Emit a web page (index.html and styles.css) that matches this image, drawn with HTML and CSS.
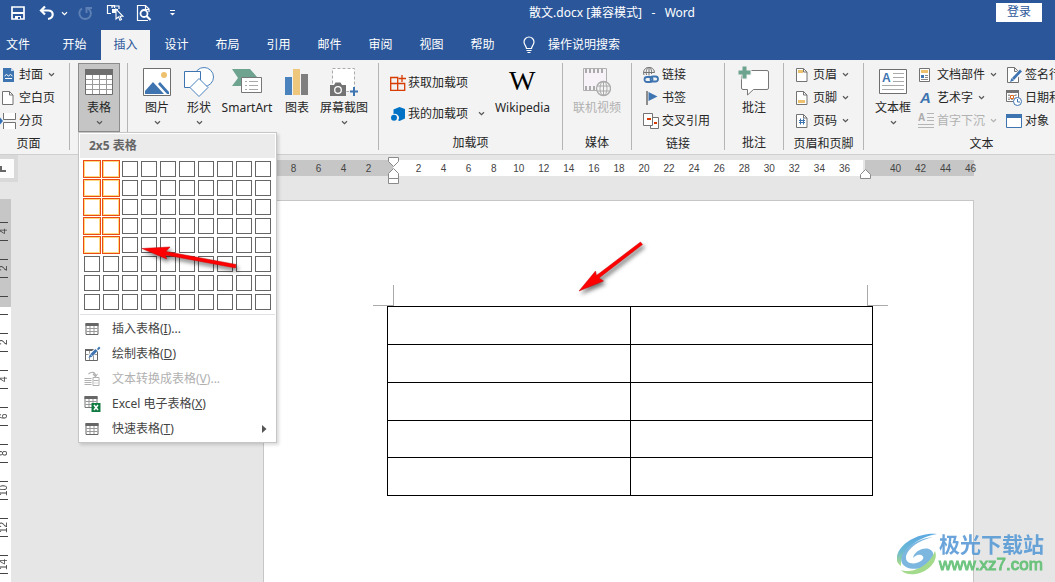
FILE: index.html
```html
<!DOCTYPE html>
<html lang="zh-CN">
<head>
<meta charset="utf-8">
<title>散文.docx - Word</title>
<link rel="stylesheet" href="styles.css">
</head>
<body>
<svg class="defs" aria-hidden="true">
  <symbol id="chev" viewBox="0 0 7 7"><path d="M1 2.2 3.5 4.6 6 2.2" fill="none" stroke="currentColor" stroke-width="1.2"/></symbol>
  <symbol id="page" viewBox="0 0 16 16"><path d="M2.5 1.5h7l3.500 3.500v9.500h-10.500z" fill="#fff" stroke="#737373"/><path d="M9.500 1.500v3.500h3.500" fill="none" stroke="#737373"/></symbol>
  <symbol id="minitable" viewBox="0 0 16 16"><path d="M1.500 2.500h12v11h-12z" fill="#fff" stroke="#666"/><path d="M1 2h13v3H1z" fill="#666"/><path d="M2 7.500h11M2 10.500h11M5.500 5v8M9.500 5v8" stroke="#999"/></symbol>
</svg>

<header class="titlebar">
  <div class="quick">
    <button class="qbtn save" aria-label="保存"><svg width="16" height="16" viewBox="0 0 16 16"><path d="M2 2h12v12H2z" fill="none" stroke="#fff" stroke-width="1.700"/><path d="M2 7h12v2H2zM5 11h6v3H5z" fill="#fff"/><path d="M8 12h2v2H8z" fill="#2b579a"/></svg></button>
    <button class="qbtn undo" aria-label="撤消"><svg width="16" height="16" viewBox="0 0 16 16"><path d="M6 1.500 2 5.500l4 4M2.500 5.500H9c6 0 6.500 7.500 0 8.500" fill="none" stroke="#fff" stroke-width="2.200"/></svg></button>
    <button class="qbtn more" aria-label="撤消列表"><svg width="7" height="7"><use href="#chev"/></svg></button>
    <button class="qbtn redo" aria-label="重复" disabled><svg width="16" height="16" viewBox="0 0 16 16"><path d="M5 3.500C0 7 3 14 8 14c6 0 8-7 3-10.500M9.500 8V3H15" fill="none" stroke="#5e80b5" stroke-width="1.900"/></svg></button>
    <button class="qbtn pick" aria-label="选择对象"><svg width="18" height="18" viewBox="0 0 18 18"><path d="M5 9.500H1.500v-8h7V4M6 4V2h7v3" fill="none" stroke="#fff" stroke-width="1.200"/><path d="M6 5h6v4H6z" fill="#fff"/><path d="M10 5v10l2.500-2.200 1.500 3.500 1.500-.7-1.500-3.300H17z" fill="#2b579a" stroke="#fff" stroke-width="1.100"/></svg></button>
    <button class="qbtn view" aria-label="打印预览"><svg width="16" height="18" viewBox="0 0 16 18"><path d="M12 16.500H1.500v-15h8l3.500 3.500v3M9.500 1.500v4H13" fill="none" stroke="#fff" stroke-width="1.200"/><circle cx="8" cy="9.500" r="3.500" fill="none" stroke="#fff" stroke-width="1.800"/><path d="m10.500 12 4 4" stroke="#fff" stroke-width="2.200"/></svg></button>
    <button class="qbtn custom" aria-label="自定义"><svg width="7" height="8" viewBox="0 0 7 8"><path d="M1 1.500h5" stroke="#fff"/><path d="M1 4h5L3.500 6.500z" fill="#fff"/></svg></button>
  </div>
  <h1 class="doc-title">散文.docx [兼容模式]&nbsp;&nbsp; -&nbsp;&nbsp; Word</h1>
  <button class="login">登录</button>
</header>

<nav class="tabs">
  <button class="tab file">文件</button>
  <button class="tab">开始</button>
  <button class="tab active">插入</button>
  <button class="tab">设计</button>
  <button class="tab">布局</button>
  <button class="tab">引用</button>
  <button class="tab">邮件</button>
  <button class="tab">审阅</button>
  <button class="tab">视图</button>
  <button class="tab">帮助</button>
  <label class="tell-me"><svg width="14" height="18" viewBox="0 0 14 18"><path d="M4.500 12.500C4.500 10 2 9 2 6a5 5 0 0 1 10 0c0 3-2.500 4-2.500 6.500zM4.500 14.500h5M5.500 16.500h3" fill="none" stroke="#fff" stroke-width="1.200"/></svg><input type="text" placeholder="操作说明搜索" aria-label="操作说明搜索"></label>
</nav>

<section class="ribbon">
  <div class="group g-pages">
    <div class="body">
      <div class="stack">
        <button class="row"><svg width="16" height="16" viewBox="0 0 16 16"><path d="M3 1h8l3 3v11H3z" fill="#3e74b0"/><path d="M11 1v3h3" fill="#c9daee"/><path d="m4.500 9 2-1.500 2 1.500 2-1.500 2 1.500M5 11.500h7" fill="none" stroke="#fff"/></svg>封面<svg class="chev" width="7" height="7"><use href="#chev"/></svg></button>
        <button class="row"><svg width="16" height="16"><use href="#page"/></svg>空白页</button>
        <button class="row"><svg width="16" height="16" viewBox="0 0 16 16"><path d="M3.500 0v6.500h12V0M3.500 16V9.500h12V16" fill="#fff" stroke="#737373"/><path d="M0 4.500 3 8l-3 3.500z" fill="#2f6fb5"/></svg>分页</button>
      </div>
    </div>
    <div class="label">页面</div>
  </div>

  <div class="group g-table">
    <div class="body">
      <button class="big pressed" aria-expanded="true"><span class="pic"><svg width="28" height="26" viewBox="0 0 28 26"><path d="M.5.500h27v25H.5z" fill="#fff" stroke="#6e6e6e"/><path d="M0 0h28v6H0z" fill="#6e6e6e"/><path d="M1 10.500h26M1 15.500h26M1 20.500h26M7.500 6v19M14.500 6v19M21.500 6v19" stroke="#999"/></svg></span>表格<svg class="chev" width="7" height="7"><use href="#chev"/></svg></button>
      <div class="menu">
        <div class="menu-head">2x5 表格</div>
        <div class="picker" id="picker"></div>
        <div class="menu-list">
          <button class="item"><svg width="16" height="16"><use href="#minitable"/></svg>插入表格(<u>I</u>)...</button>
          <button class="item"><svg width="17" height="16" viewBox="0 0 17 16"><path d="M1.500 3.500h12v11h-12z" fill="#fff" stroke="#666"/><path d="M1 3h11v2H1z" fill="#666"/><path d="M5.500 5v9M2 8.500h11M9.500 9v5" stroke="#999"/><path d="m5 11 8-8" stroke="#fff" stroke-width="4"/><path d="m7.500 9 5-5" stroke="#3e74b0" stroke-width="3"/><path d="m4.500 12 1.500-4 2.500 2.500zM13 3l2-2.500L16.500 2 14.500 4z" fill="#3e74b0"/></svg>绘制表格(<u>D</u>)</button>
          <button class="item" disabled><svg width="16" height="16" viewBox="0 0 16 16"><path d="M0 7.500h7M0 9.500h7M0 11.500h7M0 13.500h7M8.500 6.500h6v8h-6z" fill="none" stroke="#b1b1b1"/><path d="M9 9.500h5M10 12h1M12 12h1M4 3c3-3 7-2 7 2M8.500 3l2.500 2.500L13 3" fill="none" stroke="#b1b1b1" stroke-width="1.200"/></svg>文本转换成表格(<u>V</u>)...</button>
          <button class="item"><svg width="16" height="16" viewBox="0 0 16 16"><path d="M.5.500h12v11H.5z" fill="#fff" stroke="#777"/><path d="M0 0h13v3H0z" fill="#666"/><path d="M1 5.500h11M1 8.500h11M4.500 3v8M8.500 3v8" stroke="#999"/><path d="M7 7h9v9H7z" fill="#107c41"/><path d="m9.500 9 4 5M13.500 9l-4 5" stroke="#fff" stroke-width="1.500"/></svg>Excel 电子表格(<u>X</u>)</button>
          <button class="item"><svg width="16" height="16"><use href="#minitable"/></svg>快速表格(<u>T</u>)<svg class="sub" width="5" height="8" viewBox="0 0 5 8"><path d="M0 0l4.500 4L0 8z" fill="#555"/></svg></button>
        </div>
      </div>
    </div>
  </div>

  <div class="group g-art">
    <div class="body">
      <button class="big w42"><span class="pic"><svg width="28" height="28" viewBox="0 0 28 28"><path d="M.5.500h27v27H.5z" fill="#fff" stroke="#6e6e6e"/><path d="M2 26v-3l8-9 11 12zM15 16l2-2 9 10v2h-2z" fill="#3e74b0"/><circle cx="21" cy="7" r="3" fill="#eec16e"/></svg></span>图片<svg class="chev" width="7" height="7"><use href="#chev"/></svg></button>
      <button class="big w42"><span class="pic"><svg width="30" height="30" viewBox="0 0 30 30"><circle cx="20" cy="10" r="9.500" fill="#fff" stroke="#4a82bd"/><path d="M.5 4.500h16v16H.5z" fill="#fff" stroke="#3e74b0"/><path d="m15 11.500 9 9-9 9-9-9z" fill="#fff" stroke="#4a82bd"/></svg></span>形状<svg class="chev" width="7" height="7"><use href="#chev"/></svg></button>
      <button class="big w54"><span class="pic"><svg width="30" height="26" viewBox="0 0 30 26"><path d="M0 0h18l7 8-7 9H0l6-8z" fill="#6da38f"/><path d="M9.500 8.500h20v15h-20z" fill="#fff" stroke="#777"/><path d="M13 12.500h2m2 0h9M13 16.500h2m2 0h9M13 20.500h2m2 0h9" stroke="#aaa"/></svg></span>SmartArt</button>
      <button class="big w46"><span class="pic"><svg width="24" height="28" viewBox="0 0 24 28"><path d="M0 9h7v18H0z" fill="#4a82bd"/><path d="M8 1h7v26H8z" fill="#eec67c"/><path d="M16 6h7v21h-7z" fill="#7f7f7f"/></svg></span>图表</button>
      <button class="big w48"><span class="pic"><svg width="28" height="28" viewBox="0 0 28 28"><path d="M2.500.5h22v23h-22z" fill="#fff" stroke="#aaa" stroke-dasharray="3 2"/><path d="M0 17h4l1.500-2.500h5L12 17h4v11H0z" fill="#737373"/><circle cx="8" cy="22" r="3.300" fill="#737373" stroke="#fff" stroke-width="1.300"/><path d="M19 22h10v3H19z" fill="#f3f3f3"/><path d="M24 19v9M20 23.500h8" stroke="#3e74b0" stroke-width="2"/></svg></span>屏幕截图<svg class="chev" width="7" height="7"><use href="#chev"/></svg></button>
    </div>
  </div>

  <div class="group g-addins">
    <div class="body">
      <div class="stack two">
        <button class="row"><svg width="16" height="16" viewBox="0 0 16 16"><path d="M.7 2.500h7v12.800h-7zM.7 8.500h14v6.800h-14z" fill="none" stroke="#d83b01" stroke-width="1.300"/><path d="M12 0v7M8.500 3.500H16" stroke="#d83b01" stroke-width="1.300"/></svg>获取加载项</button>
        <button class="row"><svg width="16" height="16" viewBox="0 0 16 16"><path d="M3.500 3.500 9.500 1l5.500 2v9.500L9.500 15l-1.500-.7A4 4 0 0 0 3.500 8z" fill="#0072c6"/><circle cx="4" cy="11.800" r="3" fill="#0072c6"/></svg>我的加载项<svg class="chev" width="7" height="7"><use href="#chev"/></svg></button>
      </div>
      <button class="big w61"><span class="pic"><svg width="30" height="28" viewBox="0 0 30 28"><text class="wiki" x="1" y="22">W</text></svg></span>Wikipedia</button>
    </div>
    <div class="label">加载项</div>
  </div>

  <div class="group g-media">
    <div class="body">
      <button class="big" disabled><span class="pic"><svg width="28" height="30" viewBox="0 0 28 30"><path d="M.5 1.500h23v22H.5z" fill="#f7f2f8" stroke="#b0b0b0"/><path d="M2 4h20M2 21h20" stroke="#aaa" stroke-width="4" stroke-dasharray="2 2"/><circle cx="20.500" cy="21.500" r="7" fill="#f3f3f3" stroke="#aaa" stroke-width="1.300"/><path d="M14 19h13M14 24h13M20.500 15v13" stroke="#aaa"/><ellipse cx="20.500" cy="21.500" rx="3.500" ry="7" fill="none" stroke="#aaa"/></svg></span>联机视频</button>
    </div>
    <div class="label">媒体</div>
  </div>

  <div class="group g-links">
    <div class="body">
      <div class="stack">
        <button class="row"><svg width="16" height="16" viewBox="0 0 16 16"><path d="M1 8a5.500 5.500 0 1 1 10.500-2.500M.5 5.500h11M6 .5v8M3.500 8c-1-5 1-7.500 2.500-7.500S9 3 8.500 7" fill="none" stroke="#737373"/><rect x="1.500" y="10" width="8" height="5" rx="2.500" fill="none" stroke="#3e74b0" stroke-width="1.800"/><rect x="7.500" y="9.500" width="7.500" height="5" rx="2.500" fill="none" stroke="#3e74b0" stroke-width="1.800"/></svg>链接</button>
        <button class="row"><svg width="16" height="16" viewBox="0 0 16 16"><path d="M4 1v14" stroke="#737373" stroke-width="1.600"/><path d="m5.500 2 9 4.500-9 4.500z" fill="#3e74b0"/></svg>书签</button>
        <button class="row"><svg width="16" height="16" viewBox="0 0 16 16"><path d="M7.500 4.500h8v11h-8z" fill="#fff" stroke="#737373"/><path d="M.5.500h9v12H.5z" fill="#fff" stroke="#737373"/><path d="M4 5h4v2H4zM11 9h3v2h-3z" fill="#d83b01"/></svg>交叉引用</button>
      </div>
    </div>
    <div class="label">链接</div>
  </div>

  <div class="group g-comment">
    <div class="body">
      <button class="big"><span class="pic"><svg width="32" height="32" viewBox="0 0 32 32"><path d="M5 4.500h24q1.500 0 1.500 1.500v16q0 1.500-1.500 1.500H15.500L9.500 29v-5.500H5Q3.500 23.500 3.500 22V6q0-1.500 1.500-1.500z" fill="#fff" stroke="#777"/><path d="M6.500 0v13.500M0 6.500h13.500" stroke="#f3f3f3" stroke-width="6"/><path d="M6.500.5v12M.5 6.500h12" stroke="#6da38f" stroke-width="4"/></svg></span>批注</button>
    </div>
    <div class="label">批注</div>
  </div>

  <div class="group g-head">
    <div class="body">
      <div class="stack">
        <button class="row"><svg width="16" height="16" viewBox="0 0 16 16"><use href="#page"/><path d="M4 3h5v3H4z" fill="#eec16e"/></svg>页眉<svg class="chev" width="7" height="7"><use href="#chev"/></svg></button>
        <button class="row"><svg width="16" height="16" viewBox="0 0 16 16"><use href="#page"/><path d="M4 10h7v3H4z" fill="#eec16e"/></svg>页脚<svg class="chev" width="7" height="7"><use href="#chev"/></svg></button>
        <button class="row"><svg width="16" height="16" viewBox="0 0 16 16"><use href="#page"/><path d="M6.500 5.500v6M9.500 5.500v6M5 7.500h6M5 9.500h6" stroke="#3e74b0"/></svg>页码<svg class="chev" width="7" height="7"><use href="#chev"/></svg></button>
      </div>
    </div>
    <div class="label">页眉和页脚</div>
  </div>

  <div class="group g-text">
    <div class="body">
      <button class="big w50"><span class="pic"><svg width="28" height="26" viewBox="0 0 28 26"><path d="M.5.500h27v24H.5z" fill="#fff" stroke="#6e6e6e"/><path d="M14 4.500h11M14 8.500h11M14 12.500h11M3 16.500h22M3 20.500h22" stroke="#aaa"/><text class="blue-a" x="3" y="13">A</text></svg></span>文本框<svg class="chev" width="7" height="7"><use href="#chev"/></svg></button>
      <div class="stack parts">
        <button class="row"><svg width="16" height="16" viewBox="0 0 16 16"><path d="M1.500 1.500h10v13h-10z" fill="#fff" stroke="#737373"/><path d="M3 3h7v3H3z" fill="#eec16e"/><path d="M3 8h3v3H3z" fill="#3e74b0"/><path d="M7 8.500h3M7 10.500h3M3 12.500h7" stroke="#888"/></svg>文档部件<svg class="chev" width="7" height="7"><use href="#chev"/></svg></button>
        <button class="row"><svg width="16" height="16" viewBox="0 0 16 16"><text class="art-a" x="2" y="13">A</text></svg>艺术字<svg class="chev" width="7" height="7"><use href="#chev"/></svg></button>
        <button class="row" disabled><svg width="16" height="16" viewBox="0 0 16 16"><text class="drop-a" x="0" y="8">A</text><path d="M9 .5h7M9 4.500h7M9 7.500h7M0 11.500h16M0 14.500h16" stroke="#b5b5b5"/></svg>首字下沉<svg class="chev" width="7" height="7"><use href="#chev"/></svg></button>
      </div>
      <div class="stack signs">
        <button class="row"><svg width="16" height="16" viewBox="0 0 16 16"><path d="M1.500.5h7l4 4v11h-11zM8.500.5v4h4" fill="#fff" stroke="#737373"/><path d="m7 12 7-7" stroke="#fff" stroke-width="5"/><path d="m7 12 8-8.500" stroke="#3e74b0" stroke-width="2.800"/><path d="m4 15 1.500-4 2.500 2.500z" fill="#3e74b0"/></svg>签名行</button>
        <button class="row"><svg width="16" height="16" viewBox="0 0 16 16"><path d="M.5.500h12v11H.5z" fill="#fff" stroke="#737373"/><path d="M0 0h13v3H0z" fill="#737373"/><path d="M2 5.500h9M2 9.500h9M3 4v6M10 4v6" stroke="#999" stroke-dasharray="2 1"/><path d="M4.500 5.500h3v3h-3z" fill="none" stroke="#e06a1b"/><circle cx="11.500" cy="11.500" r="4" fill="#fff" stroke="#3e74b0"/><path d="M11.500 9v3H14" fill="none" stroke="#3e74b0"/></svg>日期和时间</button>
        <button class="row"><svg width="16" height="16" viewBox="0 0 16 16"><path d="M.5 1.500h15v13H.5z" fill="#fff" stroke="#3e74b0"/><path d="M0 1h16v4H0z" fill="#3e74b0"/></svg>对象</button>
      </div>
    </div>
    <div class="label">文本</div>
  </div>
</section>

<main class="workspace">
  <aside class="side">
    <button class="tabstop" aria-label="制表符"><svg width="6" height="6" viewBox="0 0 6 6"><path d="M1 0v5h5" fill="none" stroke="#666" stroke-width="2"/></svg></button>
    <div class="vruler"><span>4</span><span>2</span><span></span><span>2</span><span>4</span><span>6</span><span>8</span><span>10</span><span>12</span><span>14</span></div>
  </aside>
  <div class="canvas">
    <div class="hruler">
      <div class="margin left"><span>8</span><span>6</span><span>4</span><span>2</span></div>
      <div class="measure"><span>2</span><span>4</span><span>6</span><span>8</span><span>10</span><span>12</span><span>14</span><span>16</span><span>18</span><span>20</span><span>22</span><span>24</span><span>26</span><span>28</span><span>30</span><span>32</span><span>34</span><span>36</span></div>
      <div class="margin right"><span>40</span><span>42</span><span>44</span><span>46</span></div>
      <svg class="indent start" width="11" height="28" viewBox="0 0 11 28"><path d="M.5.500h10v4l-5 5-5-5zM.5 21.500v-5l5-5 5 5v5zM.5 21.500h10v5H.5z" fill="#fff" stroke="#8a8a8a"/></svg>
      <svg class="indent end" width="11" height="11" viewBox="0 0 11 11"><path d="M.5 9.500v-4l5-5 5 5v4z" fill="#fff" stroke="#8a8a8a"/></svg>
    </div>
    <article class="sheet">
      <div class="corners"><i class="corner tl"></i><i class="corner tr"></i></div>
      <table class="doc-table">
        <tbody>
          <tr><td></td><td></td></tr>
          <tr><td></td><td></td></tr>
          <tr><td></td><td></td></tr>
          <tr><td></td><td></td></tr>
          <tr><td></td><td></td></tr>
        </tbody>
      </table>
    </article>
  </div>
</main>

<svg class="arrow a1" width="110" height="40" viewBox="0 0 110 40"><path d="M6 8.500 34 7l-4 4.500L100 24.500l-.5 3.500L29.500 15l1.200 4z" fill="#fe0000" stroke="#c00" stroke-width=".5"/></svg>
<svg class="arrow a2" width="80" height="64" viewBox="0 0 80 64"><path d="M5 55 21.500 35l1 4.500L66.500 6l2 2.500L25 42l4.500 3z" fill="#fe0000" stroke="#c00" stroke-width=".5"/></svg>

<div class="watermark">
  <svg width="42" height="42" viewBox="0 0 42 42">
    <defs><linearGradient id="sw" x1="0" y1="0" x2="0" y2="1"><stop offset="0" stop-color="#4a9fdf"/><stop offset=".55" stop-color="#5cb3cf"/><stop offset="1" stop-color="#a8db6e"/></linearGradient></defs>
    <path d="M40 1C24-1 3 9 0 23c-1 5 1 8 4 10C3 19 18 5 40 1z" fill="url(#sw)"/>
    <path d="M36 4C20 8 9 17 9 25c0 6 9 7 15 3 3-2 3-5 0-6-3-1-6 1-8 3 1-6 9-11 16-9 8 3 4 14-5 18-10 4-20 1-22-4C1 20 16 6 36 4z" fill="#6fb0dd"/>
    <path d="M38 18c4 10-7 21-19 23-6 1-12 0-15-4 8 3 26 0 34-19z" fill="#9ad680"/>
  </svg>
  <div class="mark-text"><strong>极光下载站</strong><span>www.xz7.com</span></div>
</div>
<script src="picker.js"></script>
</body>
</html>
```
FILE: styles.css
```css
* { box-sizing: border-box; }
html, body { height: 100%; }
body {
  margin: 0;
  min-height: 100vh;
  display: flex;
  flex-direction: column;
  position: relative;
  overflow: hidden;
  background: #e6e6e6;
  color: #262626;
  font: 12px/18px "Noto Sans", "Noto Sans CJK SC", sans-serif;
}
button, input {
  font: inherit;
  color: inherit;
  border: 0;
  margin: 0;
  padding: 0;
  background: none;
}
button { white-space: nowrap; }
svg { display: block; flex: none; }
.defs { position: absolute; width: 0; height: 0; }

/* title bar */
.titlebar {
  display: flex;
  align-items: center;
  height: 30px;
  padding: 0 13px 4px 0;
  background: #2b579a;
  color: #fff;
  flex: none;
}
.quick {
  display: flex;
  align-items: center;
  width: 228px;
  padding-left: 10px;
}
.qbtn { display: flex; }
.undo { margin-left: 13px; }
.more { margin-left: 6px; }
.redo { margin-left: 9px; }
.pick { margin-left: 13px; }
.view { margin-left: 12px; }
.custom { margin-left: 17px; }
.doc-title {
  flex: 1;
  margin: 0;
  text-align: center;
  font-size: 12px;
  font-weight: 400;
}
.login {
  width: 46px;
  height: 19px;
  margin-bottom: 2px;
  background: #fff;
  color: #2b579a;
}

/* tabs */
.tabs {
  display: flex;
  gap: 2px;
  height: 30px;
  flex: none;
  background: #2b579a;
  color: #fff;
}
.tab { width: 49px; }
.tab.file { width: 36px; margin-right: 12px; }
.tab.active { background: #f3f3f3; color: #2b579a; }
.tell-me {
  display: flex;
  align-items: center;
  gap: 12px;
  margin-left: 13px;
}
.tell-me input { width: 120px; outline: none; }
.tell-me input::placeholder { color: #fff; opacity: 1; }

/* ribbon */
.ribbon {
  display: flex;
  flex: none;
  padding: 3px 0 4px;
  background: #f3f3f3;
  border-bottom: 1px solid #cfcfcf;
}
.group {
  flex: none;
  display: flex;
  flex-direction: column;
  height: 87px;
  border-right: 1px solid #b5b5b5;
}
.body { display: flex; height: 69px; }
.label {
  padding-top: 4px;
  line-height: 15px;
  text-align: center;
}
.stack { display: flex; flex-direction: column; }
.stack.two { padding: 4px 0 0 11px; width: 113px; }
.row {
  display: flex;
  align-items: center;
  gap: 3px;
  height: 23px;
}
.two .row { height: 31px; gap: 2px; }
.row .chev { margin-left: 2px; }
.two .chev { margin-left: 8px; }
.chev { color: #555; }
button:disabled, button:disabled .chev { color: #b1b1b1; }
.big {
  display: flex;
  flex-direction: column;
  align-items: center;
  padding-top: 3px;
}
.pic {
  display: flex;
  align-items: center;
  justify-content: center;
  height: 32px;
  margin-bottom: 1px;
}
.big .chev { margin-top: 2px; }
.w42 { width: 42px; }
.w46 { width: 46px; }
.w48 { width: 48px; }
.w50 { width: 50px; }
.w54 { width: 54px; }
.w61 { width: 61px; }
.g-pages { width: 70px; }
.g-pages .label { padding-right: 12px; }
.g-table { width: 58px; }
.g-table .body { position: relative; padding-left: 8px; }
.pressed {
  width: 42px;
  padding-top: 2px;
  background: #c5c5c5;
  border: 1px solid #8c8c8c;
}
.g-art { width: 251px; padding-left: 8px; }
.g-addins { width: 184px; }
.g-media { width: 69px; }
.g-comment { width: 59px; }
.g-media .body, .g-comment .body { justify-content: center; }
.g-links { width: 93px; }
.g-links .stack { padding-left: 11px; }
.g-head { width: 80px; }
.g-head .stack { padding-left: 10px; }
.g-text { width: 236px; padding-left: 4px; }
.g-text .label { padding-right: 4px; }
.parts { width: 88px; }
.wiki { font: 28px "Liberation Serif", serif; fill: #000; }
.blue-a { font: bold 12px "Liberation Sans", sans-serif; fill: #3e74b0; }
.art-a { font: italic bold 15px "Liberation Sans", sans-serif; fill: #3e74b0; }
.drop-a { font: bold 10px "Liberation Sans", sans-serif; fill: #aaa; }

/* table menu */
.menu {
  position: absolute;
  z-index: 5;
  top: 100%;
  left: 8px;
  width: 199px;
  padding: 1px;
  background: #fff;
  border: 1px solid #c6c6c6;
  box-shadow: 2px 2px 3px rgba(0, 0, 0, .15);
  color: #444;
}
.menu-head {
  height: 24px;
  padding-left: 9px;
  line-height: 24px;
  font-weight: 700;
  color: #666;
  background: #ebebeb;
}
.picker {
  display: grid;
  grid-template-columns: repeat(10, 18px);
  gap: 1px;
  padding: 2px 0 3px 3px;
  border-bottom: 1px solid #e1e1e6;
}
.cell {
  width: 16px;
  height: 16px;
  margin: 1px;
  background: #fff;
  border: 1px solid #666;
}
.cell.on {
  border-color: #ffd980;
  outline: 1px solid #eb4b14;
}
.menu-list { display: flex; flex-direction: column; padding-top: 1px; }
.item {
  display: flex;
  align-items: center;
  height: 25px;
  padding-left: 4px;
}
.item > svg:first-child { width: 17px; margin-right: 11px; }
.item .sub { margin: 0 8px 0 auto; }

/* workspace */
.workspace { display: flex; flex: 1; min-height: 0; }
.side { width: 263px; flex: none; overflow: hidden; }
.tabstop {
  display: flex;
  align-items: center;
  width: 18px;
  height: 27px;
  border: solid #d9d9d9;
  border-width: 4px 4px 4px 0;
  background: #fcfcfc;
}
.vruler {
  display: flex;
  flex-direction: column;
  gap: 18px;
  width: 11px;
  height: 440px;
  margin-top: 17px;
  padding: 23px 0 0;
  background: linear-gradient(#c6c6c6 108px, #fff 108px);
}
.vruler span {
  flex: none;
  width: 8px;
  height: 19px;
  border: solid #444;
  border-width: 1px 0;
  font: 10px/8px "Liberation Sans", sans-serif;
  text-align: center;
  color: #444;
  writing-mode: vertical-rl;
  transform: rotate(180deg);
}
.canvas {
  flex: 1;
  display: flex;
  flex-direction: column;
  padding: 5px 81px 0 0;
}
.hruler {
  position: relative;
  display: flex;
  height: 16px;
  font: 10px/17px "Liberation Sans", sans-serif;
  text-align: center;
  color: #444;
}
.hruler span { min-width: 0; }
.margin { display: grid; background: #c6c6c6; }
.margin.left { width: 130px; padding-left: 18px; grid-template-columns: repeat(4, 25px); }
.measure {
  flex: 1;
  display: grid;
  grid-template-columns: repeat(18, 1fr);
  padding: 0 6px 0 13px;
  background: #fff;
}
.margin.right { width: 109px; margin-left: 2px; padding-left: 18px; grid-template-columns: repeat(4, 25px); }
.indent { position: absolute; }
.indent.start { left: 125px; top: -3px; }
.indent.end { right: 103px; top: 9px; }
.sheet {
  flex: 1;
  margin-top: 24px;
  padding: 84px 100px 0 123px;
  background: #fff;
  border: 1px solid #c6c6c6;
  border-bottom: 0;
}
.corners {
  display: flex;
  justify-content: space-between;
  margin: 0 -15px 0 -14px;
}
.corner { width: 21px; height: 21px; border: solid #aaa; border-width: 0 0 1px; }
.tl { border-right-width: 1px; }
.tr { border-left-width: 1px; }
.doc-table { width: 100%; border-collapse: collapse; table-layout: fixed; }
.doc-table td { height: 38px; padding: 0; border: 1px solid #000; }
.doc-table tr:nth-child(4) td { height: 37px; }

/* annotation arrows and site mark */
.arrow { position: absolute; z-index: 6; filter: drop-shadow(2px 3px 2px rgba(0, 0, 0, .55)); }
.a1 { left: 136px; top: 240px; }
.a2 { left: 574px; top: 236px; }
.watermark {
  position: absolute;
  right: 11px;
  bottom: 7px;
  display: flex;
  align-items: center;
  opacity: .9;
}
.mark-text { display: flex; flex-direction: column; line-height: 22px; }
.mark-text strong { font-size: 21px; color: #5a9bd6; }
.mark-text span {
  font: 17px/20px "Liberation Sans", sans-serif;
  color: #5fbf72;
  -webkit-text-stroke: 1px #5fbf72;
}
```
FILE: picker.js
```js
const picker = document.getElementById('picker');
const columns = 10, rows = 8, chosen = { columns: 2, rows: 5 };
for (let r = 0; r < rows; r++) {
  for (let c = 0; c < columns; c++) {
    const cell = document.createElement('button');
    cell.className = c < chosen.columns && r < chosen.rows ? 'cell on' : 'cell';
    cell.setAttribute('aria-label', (c + 1) + 'x' + (r + 1));
    picker.append(cell);
  }
}
```
